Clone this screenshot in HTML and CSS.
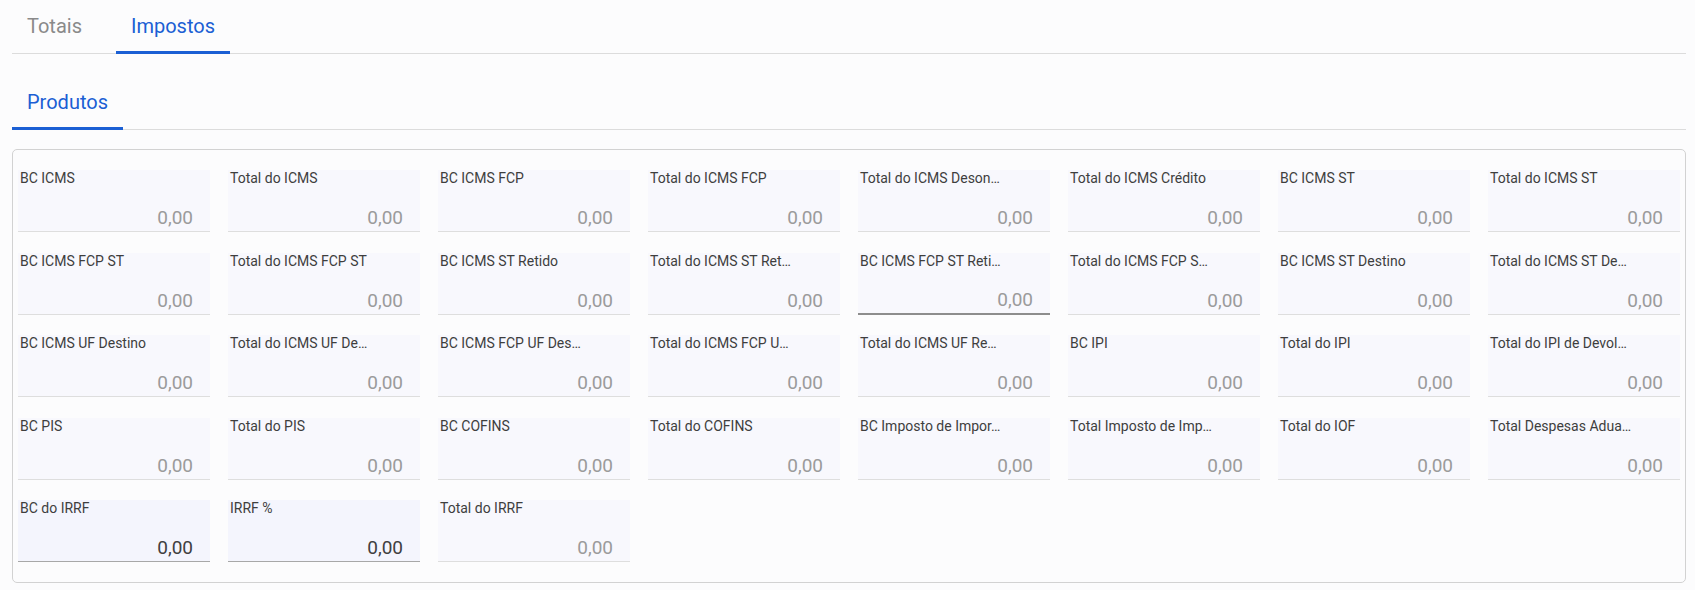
FILE: index.html
```html
<!DOCTYPE html>
<html lang="pt-BR">
<head>
    <meta charset="UTF-8">
    <meta name="viewport" content="width=device-width, initial-scale=1.0">
    <title>Impostos</title>
    <link rel="stylesheet" href="styles.css">
</head>
<body>
    <nav class="tabs">
        <a class="tab" href="#">Totais</a>
        <a class="tab active" href="#">Impostos</a>
    </nav>

    <nav class="tabs sub-tabs">
        <a class="tab active" href="#">Produtos</a>
    </nav>

    <section class="card">
        <div class="fields">
            <div class="field"><span class="label">BC ICMS</span><span class="value">0,00</span></div>
            <div class="field"><span class="label">Total do ICMS</span><span class="value">0,00</span></div>
            <div class="field"><span class="label">BC ICMS FCP</span><span class="value">0,00</span></div>
            <div class="field"><span class="label">Total do ICMS FCP</span><span class="value">0,00</span></div>
            <div class="field"><span class="label" title="Total do ICMS Desonerado">Total do ICMS Deson…</span><span class="value">0,00</span></div>
            <div class="field"><span class="label">Total do ICMS Crédito</span><span class="value">0,00</span></div>
            <div class="field"><span class="label">BC ICMS ST</span><span class="value">0,00</span></div>
            <div class="field"><span class="label">Total do ICMS ST</span><span class="value">0,00</span></div>

            <div class="field"><span class="label">BC ICMS FCP ST</span><span class="value">0,00</span></div>
            <div class="field"><span class="label">Total do ICMS FCP ST</span><span class="value">0,00</span></div>
            <div class="field"><span class="label">BC ICMS ST Retido</span><span class="value">0,00</span></div>
            <div class="field"><span class="label" title="Total do ICMS ST Retido">Total do ICMS ST Ret…</span><span class="value">0,00</span></div>
            <div class="field hover"><span class="label" title="BC ICMS FCP ST Retido">BC ICMS FCP ST Reti…</span><span class="value">0,00</span></div>
            <div class="field"><span class="label" title="Total do ICMS FCP ST Retido">Total do ICMS FCP S…</span><span class="value">0,00</span></div>
            <div class="field"><span class="label">BC ICMS ST Destino</span><span class="value">0,00</span></div>
            <div class="field"><span class="label" title="Total do ICMS ST Destino">Total do ICMS ST De…</span><span class="value">0,00</span></div>

            <div class="field"><span class="label">BC ICMS UF Destino</span><span class="value">0,00</span></div>
            <div class="field"><span class="label" title="Total do ICMS UF Destino">Total do ICMS UF De…</span><span class="value">0,00</span></div>
            <div class="field"><span class="label" title="BC ICMS FCP UF Destino">BC ICMS FCP UF Des…</span><span class="value">0,00</span></div>
            <div class="field"><span class="label" title="Total do ICMS FCP UF Destino">Total do ICMS FCP U…</span><span class="value">0,00</span></div>
            <div class="field"><span class="label" title="Total do ICMS UF Remetente">Total do ICMS UF Re…</span><span class="value">0,00</span></div>
            <div class="field"><span class="label">BC IPI</span><span class="value">0,00</span></div>
            <div class="field"><span class="label">Total do IPI</span><span class="value">0,00</span></div>
            <div class="field"><span class="label" title="Total do IPI de Devolução">Total do IPI de Devol…</span><span class="value">0,00</span></div>

            <div class="field"><span class="label">BC PIS</span><span class="value">0,00</span></div>
            <div class="field"><span class="label">Total do PIS</span><span class="value">0,00</span></div>
            <div class="field"><span class="label">BC COFINS</span><span class="value">0,00</span></div>
            <div class="field"><span class="label">Total do COFINS</span><span class="value">0,00</span></div>
            <div class="field"><span class="label" title="BC Imposto de Importação">BC Imposto de Impor…</span><span class="value">0,00</span></div>
            <div class="field"><span class="label" title="Total Imposto de Importação">Total Imposto de Imp…</span><span class="value">0,00</span></div>
            <div class="field"><span class="label">Total do IOF</span><span class="value">0,00</span></div>
            <div class="field"><span class="label" title="Total Despesas Aduaneiras">Total Despesas Adua…</span><span class="value">0,00</span></div>

            <div class="field editable"><span class="label">BC do IRRF</span><span class="value">0,00</span></div>
            <div class="field editable"><span class="label">IRRF %</span><span class="value">0,00</span></div>
            <div class="field"><span class="label">Total do IRRF</span><span class="value">0,00</span></div>
        </div>
    </section>
</body>
</html>
```

FILE: styles.css
```css
body {
    margin: 0;
    background-color: #fcfcfd;
    font-family: Roboto, "Liberation Sans", sans-serif;
    color: #444;
}

.tabs {
    display: flex;
    gap: 19px;
    height: 53px;
    margin: 0 9px 0 12px;
    border-bottom: 1px solid #dcdcdc;
}

.tab {
    display: flex;
    align-items: center;
    padding: 1px 15px 1px;
    margin-bottom: -1px;
    font-size: 20px;
    color: #8a8a8a;
    text-decoration: none;
    border-bottom: 3px solid transparent;
    white-space: nowrap;
}

.tab.active {
    color: #1b5fd4;
    border-bottom-color: #1b5fd4;
}

.sub-tabs {
    margin-top: 22px;
}

.card {
    margin: 19px 9px 0 12px;
    padding: 20px 5px 20px 5px;
    border: 1px solid #d2d2d2;
    border-radius: 5px;
}

.fields {
    display: grid;
    grid-template-columns: repeat(8, 192px);
    column-gap: 18px;
    row-gap: 20.5px;
}

.field {
    display: flex;
    flex-direction: column;
    justify-content: space-between;
    height: 61px;
    padding: 0 17px 0 2px;
    background-color: #f8f8fd;
    border-bottom: 1px solid #dedede;
}

.label {
    font-size: 14px;
    line-height: 17px;
    color: #3e3e3e;
    white-space: nowrap;
}

.value {
    text-align: right;
    font-size: 19px;
    line-height: 24px;
    color: #9b9b9b;
    padding-bottom: 1px;
}

.field.hover {
    height: 60px;
    border-bottom: 2px solid #8d8d8d;
}

.field.editable {
    background-color: #f4f5fd;
    border-bottom-color: #a8a8a8;
}

.field.editable .value {
    color: #404040;
}
```
